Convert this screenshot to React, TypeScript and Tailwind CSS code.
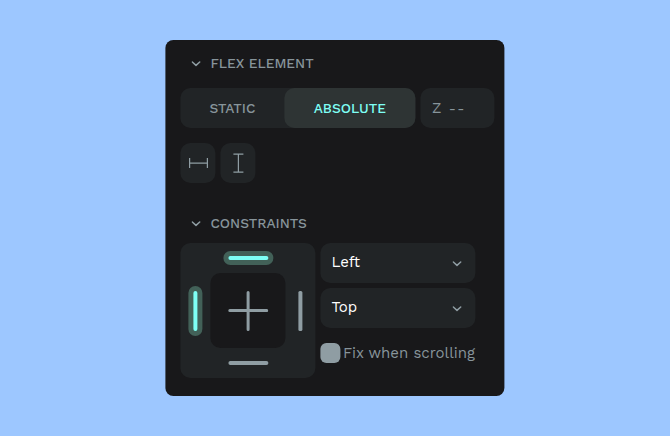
import React from "react";

function Chevron() {
  return (
    <svg width="10" height="6" viewBox="0 0 10 6" fill="none" stroke="#8f9da3" strokeWidth="1.5" strokeLinecap="round" strokeLinejoin="round">
      <path d="M.9 1l3.7 3.4L8.3 1" />
    </svg>
  );
}

function SectionTitle({ children }: { children: React.ReactNode }) {
  return (
    <div className="flex h-5 items-center pl-[10.5px] pt-px text-[13.75px] font-medium text-[#87949a]">
      <Chevron />
      <span className="ml-[9.5px]">{children}</span>
    </div>
  );
}

function Select({ value }: { value: string }) {
  return (
    <div className="flex h-10 items-center justify-between rounded-[10px] bg-[#212426] pl-[11px] pr-[13.5px] text-[15px] text-white">
      <span className="pb-0.5">{value}</span>
      <div className="pt-[1.5px]"><Chevron /></div>
    </div>
  );
}

export default function App() {
  return (
    <div className="flex h-[436px] w-[670px] bg-[#9dc7ff] pl-[165px] pt-10 font-['Work_Sans',Inter,sans-serif]">
      <div className="h-[355.5px] w-[339px] translate-x-[0.4px] rounded-[8px] bg-[#18181a] pl-[15px] pt-[13px]">
        <SectionTitle>FLEX ELEMENT</SectionTitle>
        <div className="mt-[15px] flex gap-[5px] text-[13.75px] font-medium">
          <div className="flex h-10 w-[235px] rounded-[10px] bg-[#212426]">
            <div className="flex w-[104px] items-center justify-center pt-px text-[#87949a]">STATIC</div>
            <div className="flex w-[131px] items-center justify-center rounded-[10px] bg-[#2e3434] pt-px text-[#7efff5]">ABSOLUTE</div>
          </div>
          <div className="flex h-10 w-[74px] items-center rounded-[10px] bg-[#212426] pl-[11.5px] text-[15px] font-normal text-[#87949a]">
            <span>Z</span>
            <span className="ml-[7.5px] text-[14px] tracking-[1.3px]">--</span>
          </div>
        </div>
        <div className="mt-[15px] flex gap-[5px]">
          <div className="flex h-10 w-[35px] items-center justify-center rounded-[10px] bg-[#212426]">
            <svg width="20" height="20" viewBox="0 0 20 20" fill="none" stroke="#8f9da3" strokeWidth="1.25">
              <path d="M1.2 5v10M19 5v10M1.2 10H19" />
            </svg>
          </div>
          <div className="flex h-10 w-[35px] items-center justify-center rounded-[10px] bg-[#212426]">
            <svg width="20" height="20" viewBox="0 0 20 20" fill="none" stroke="#8f9da3" strokeWidth="1.25">
              <path d="M5 1h10M5 19h10M10 1v18" />
            </svg>
          </div>
        </div>
        <div className="mt-[30px]">
          <SectionTitle>CONSTRAINTS</SectionTitle>
        </div>
        <div className="mt-[10px] flex gap-[5px]">
          <div className="grid h-[135px] w-[135px] grid-cols-[30px_75px_30px] grid-rows-[30px_75px_30px] place-items-center rounded-[10px] bg-[#212426]">
            <div className="col-start-2 flex h-[14px] w-[50px] items-center justify-center rounded-full bg-[#426158]">
              <div className="h-1 w-10 rounded-full bg-[#7efff5]" />
            </div>
            <div className="col-start-1 row-start-2 flex h-[50px] w-[14px] items-center justify-center rounded-full bg-[#426158]">
              <div className="h-10 w-1 rounded-full bg-[#7efff5]" />
            </div>
            <div className="col-start-2 row-start-2 flex h-[75px] w-[75px] items-center justify-center rounded-[10px] bg-[#18181a]">
              <svg width="41" height="41" viewBox="0 0 41 41" fill="none" stroke="#8f9da3" strokeWidth="3" strokeLinecap="round">
                <path d="M2.4 20.5h37M20.7 2.4v37" />
              </svg>
            </div>
            <div className="col-start-3 row-start-2 h-10 w-1 rounded-[1.5px] bg-[#8f9da3]" />
            <div className="col-start-2 row-start-3 h-1 w-10 rounded-full bg-[#8f9da3]" />
          </div>
          <div className="flex w-[155px] flex-col gap-[5px]">
            <Select value="Left" />
            <Select value="Top" />
            <div className="mt-[10px] flex h-5 items-center">
              <div className="h-5 w-5 shrink-0 rounded-[6px] bg-[#8f9da3]" />
              <span className="ml-[2.5px] whitespace-nowrap text-[15px] text-[#87949a]">Fix when scrolling</span>
            </div>
          </div>
        </div>
      </div>
    </div>
  );
}
